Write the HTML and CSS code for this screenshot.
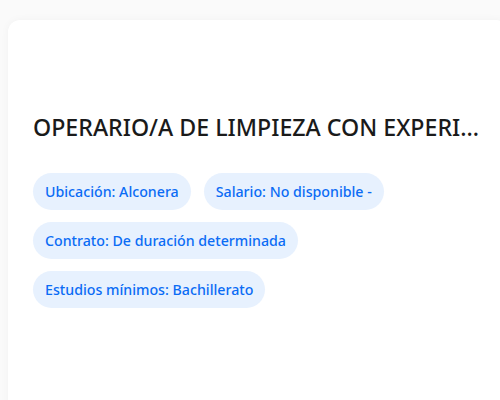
FILE: index.html
```html
<!DOCTYPE html>
<html lang="es">
<head>
<meta charset="utf-8">
<link rel="stylesheet" href="styles.css">
</head>
<body>
<div class="card">
  <h1 class="title">OPERARIO/A DE LIMPIEZA CON EXPERIENCIA EN LIMPIEZA INDUSTRIAL</h1>
  <div class="tags">
    <span class="tag">Ubicación: Alconera</span>
    <span class="tag">Salario: No disponible -</span>
    <span class="tag">Contrato: De duración determinada</span>
    <span class="tag">Estudios mínimos: Bachillerato</span>
  </div>
</div>
</body>
</html>
```
FILE: styles.css
```css
html, body {
  margin: 0;
  padding: 0;
  background: #fafafa;
  overflow: hidden;
  width: 500px;
  height: 400px;
}
body {
  padding: 20px 0 0 8px;
  box-sizing: border-box;
  font-family: "Noto Sans", "Open Sans", sans-serif;
}
.card {
  width: 500px;
  height: 400px;
  background: #ffffff;
  border-radius: 12px;
  box-shadow: 0 0 8px rgba(0, 0, 0, 0.04);
  padding: 92px 17px 0 25px;
  box-sizing: border-box;
}
.title {
  margin: 0 0 31px 0;
  font-size: 23.2px;
  font-weight: 500;
  line-height: 30px;
  color: #1a1a1a;
  white-space: nowrap;
  overflow: hidden;
  text-overflow: ellipsis;
}
.tags {
  display: flex;
  flex-wrap: wrap;
  gap: 12px 13px;
  width: 380px;
}
.tag {
  display: inline-block;
  height: 37px;
  line-height: 37px;
  padding: 0 12px;
  border-radius: 19px;
  background: #e7f1fe;
  color: #0b6cf5;
  font-size: 14.2px;
  font-weight: 500;
  white-space: nowrap;
}
```
